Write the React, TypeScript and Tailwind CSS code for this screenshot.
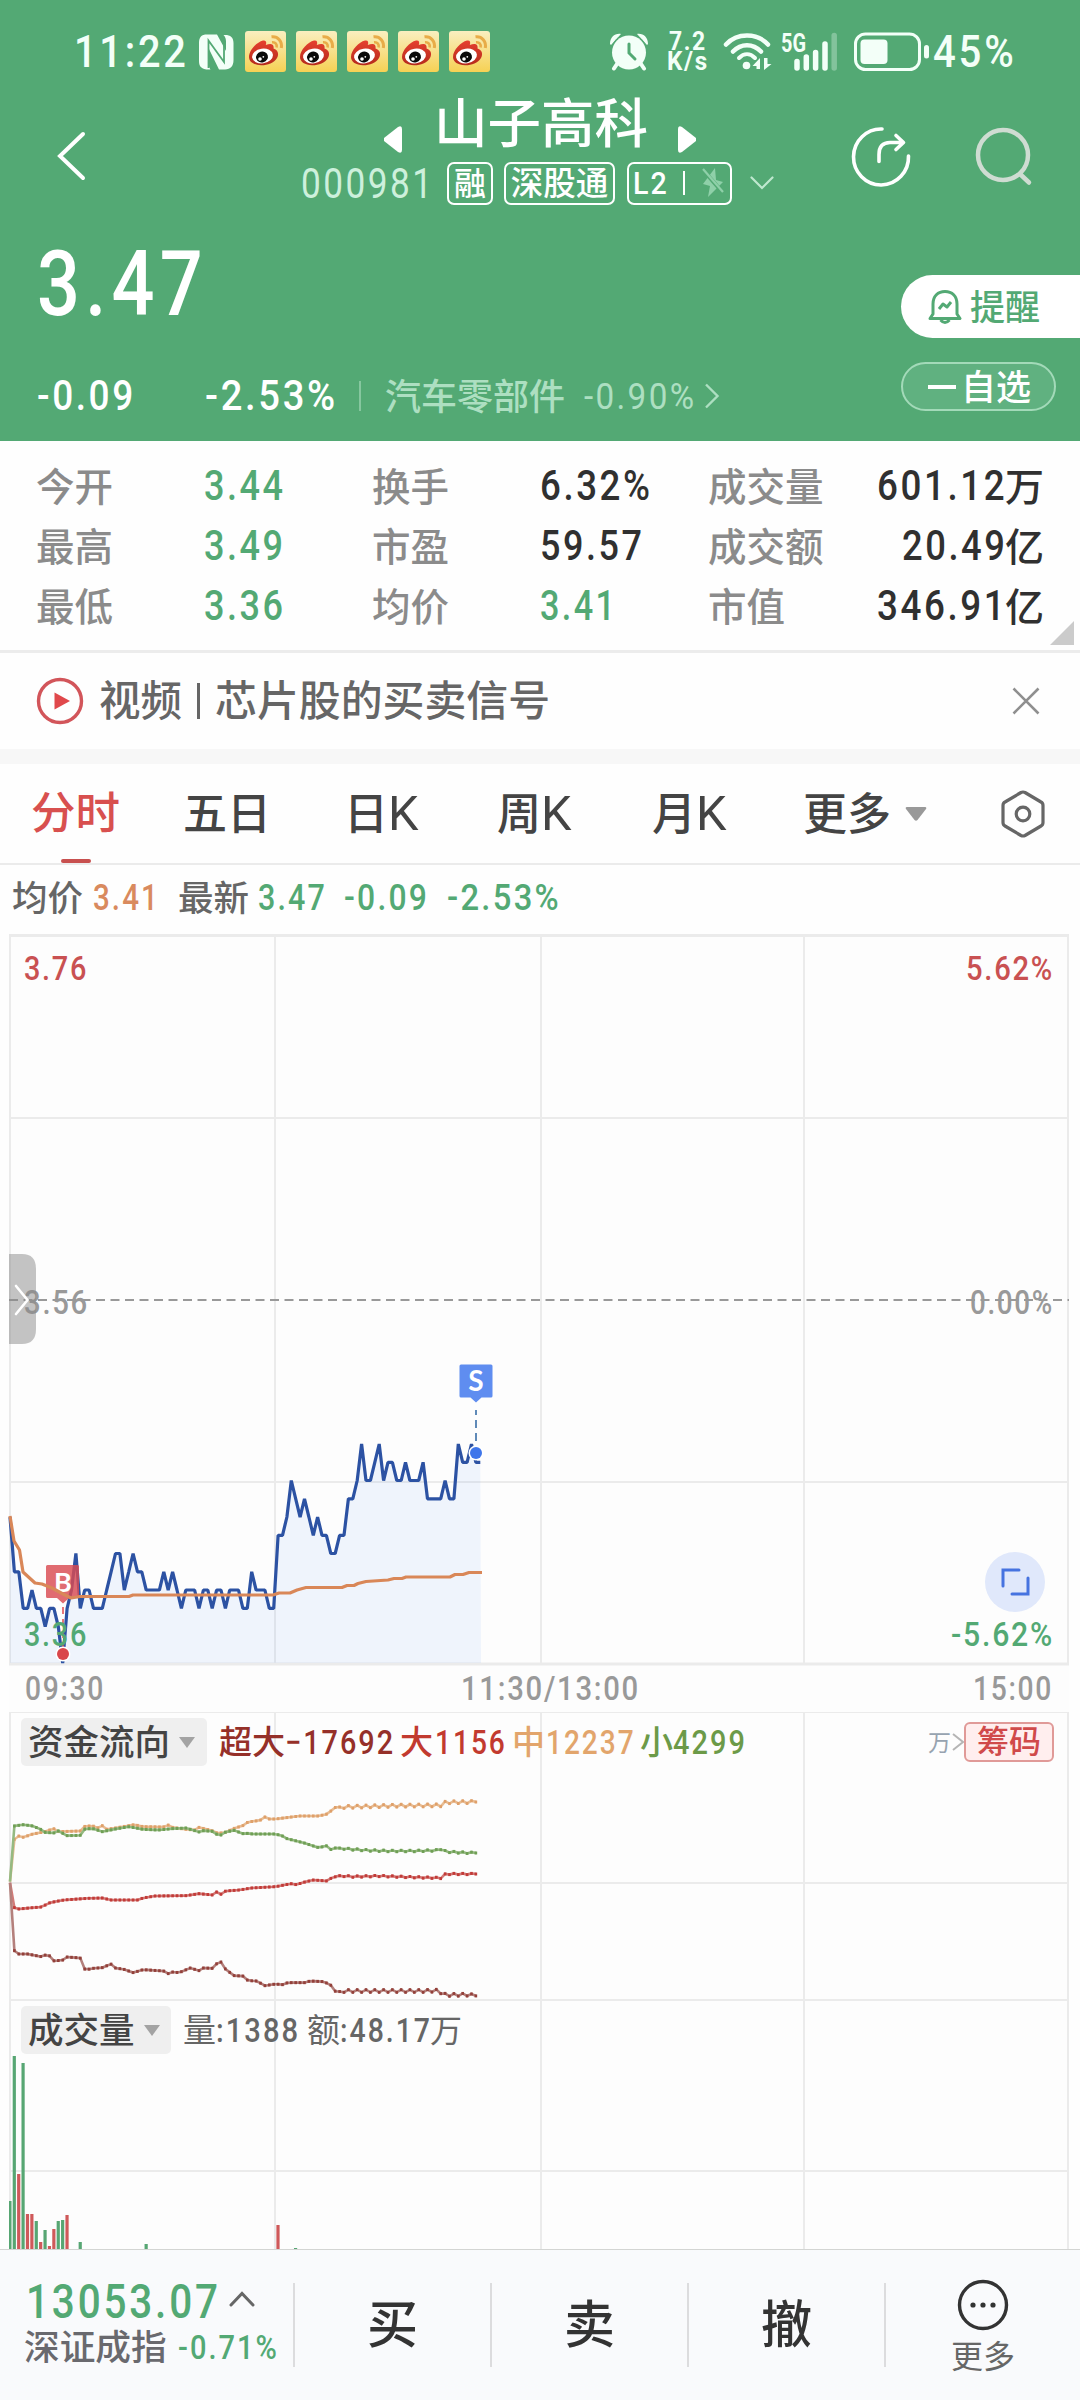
import { useLayoutEffect, useRef, useState } from "react";
import type { ReactNode } from "react";

/** Loosely tracked text, squeezed horizontally so that it takes exactly w pixels. */
function Fit({ w, className = "", children }: { w: number; className?: string; children: ReactNode }) {
  const ref = useRef<HTMLSpanElement>(null);
  const [k, setK] = useState(1);
  useLayoutEffect(() => {
    const el = ref.current;
    if (!el) return;
    const trailing = parseFloat(getComputedStyle(el).letterSpacing) || 0;
    setK(w / (el.offsetWidth - trailing));
  }, [w]);
  return (
    <span className={"block shrink-0 leading-none " + className} style={{ width: w }}>
      <span ref={ref} className="inline-block origin-left whitespace-nowrap align-top tracking-[0.07em]" style={{ transform: `scaleX(${k})` }}>
        {children}
      </span>
    </span>
  );
}

/** Chinese text, one em per character. */
function Cn({ className = "", children }: { className?: string; children: ReactNode }) {
  return (
    <span className={"block shrink-0 -translate-y-[0.06em] whitespace-nowrap font-['Noto_Sans_CJK_SC',sans-serif] leading-none " + className}>
      {children}
    </span>
  );
}

function Weibo() {
  return (
    <svg viewBox="0 0 41 41" className="h-[41px] w-[41px] shrink-0">
      <defs>
        <linearGradient id="wb" x1="0" y1="0" x2="0" y2="1">
          <stop offset="0" stopColor="#f9efc0" />
          <stop offset="1" stopColor="#f6d154" />
        </linearGradient>
        <linearGradient id="wr" x1="0" y1="0" x2="0" y2="1">
          <stop offset="0" stopColor="#e6402f" />
          <stop offset="1" stopColor="#b52a1c" />
        </linearGradient>
      </defs>
      <rect width="41" height="41" rx="3" fill="url(#wb)" />
      <path d="M4 26C4 19 12 11 18 9.5c3-.6 3.800 1.500 2.800 4.500 4-1.800 8.700-1.800 7.700 3.500 5 1.600 5.500 6 3.500 9.500C29 32 22 34.500 16 34.300 9 34 4 31 4 26z" fill="url(#wr)" />
      <ellipse cx="17.500" cy="25" rx="10.500" ry="7.300" fill="#fff" transform="rotate(-8 17.500 25)" />
      <ellipse cx="17" cy="26" rx="6" ry="5.400" fill="#0a0a0a" transform="rotate(-15 17 26)" />
      <circle cx="15" cy="28" r="1.800" fill="#fff" />
      <circle cx="18.300" cy="25.800" r=".9" fill="#fff" />
      <path d="M26.500 5.800C33 5 37.500 10.500 36.300 17" fill="none" stroke="#e8ac48" strokeWidth="3" />
      <path d="M27 11.300c3.500-.3 5.300 2 4.600 5.200" fill="none" stroke="#e8ac48" strokeWidth="2.600" />
    </svg>
  );
}

function StatusBar() {
  return (
    <div className="flex h-[103px] items-center text-[#f3fff8]">
      <Fit w={112} className="ml-[74px] text-[45px] font-medium">11:22</Fit>
      <svg viewBox="0 0 35 36" className="ml-[13px] h-[36px] w-[35px] shrink-0">
        <path d="M8 .5h10L27 17V8c0-3-.5-5-2.500-7C31 .5 34.500 3 34.500 9v17c0 6-3 9.500-8.500 9.500h-6L9.500 14v14c0 3 .5 5.500 2 7.500C3 36 0 33 0 27V9C0 3 2.500.5 8 .5z" fill="#f3fff8" />
        <path d="M12.500 13L20 25v-6" fill="none" />
        <path d="M20 9l7 12v6.500L12 7" fill="none" />
        <path d="M9.500 34V6.500L25 28V6" fill="none" stroke="#53a974" strokeWidth="1.800" />
      </svg>
      <div className="ml-[11px] flex gap-[10px]">
        <Weibo /><Weibo /><Weibo /><Weibo /><Weibo />
      </div>
      <svg viewBox="0 0 38 38" className="ml-[120px] h-[38px] w-[38px] shrink-0">
        <g fill="#f3fff8">
          <path d="M0 11C0 4 5 0 11 1L1 12zM38 11c0-7-5-11-11-10l10 11z" />
          <circle cx="19" cy="19.500" r="18.500" fill="#53a974" />
          <circle cx="19" cy="19.500" r="17" />
        </g>
        <path d="M7 31l-3 4.500M31 31l3 4.500" stroke="#f3fff8" strokeWidth="4" strokeLinecap="round" />
        <path d="M19 11v9l6 6" fill="none" stroke="#53a974" strokeWidth="3" strokeLinecap="round" />
      </svg>
      <div className="ml-[18px] flex w-[41px] shrink-0 -translate-y-[2px] flex-col items-center">
        <Fit w={36} className="h-[20px] text-[25px] font-bold">7.2</Fit>
        <Fit w={40} className="h-[22px] text-[25px] font-bold">K/s</Fit>
      </div>
      <svg viewBox="0 0 120 40" className="ml-[16px] h-[40px] w-[120px] shrink-0" fill="none" stroke="#f3fff8" strokeLinecap="round">
        <path d="M3 12.500C14 .500 34 .500 45 12.500" strokeWidth="4.500" />
        <path d="M10 19.500c8-8.500 20-8.500 28 0" strokeWidth="4.500" />
        <path d="M16 26c5-5 11-5 16 0" strokeWidth="4" />
        <circle cx="23.500" cy="33.500" r="3.800" fill="#f3fff8" stroke="none" />
        <path d="M29.500 34l7.500-8v11h-3.500v-3zM48.500 32l-7.500 6V26h3.500v6z" fill="#f3fff8" stroke="none" />
        <g strokeWidth="5.500">
          <path d="M74 29.500v6.500M83.300 25v11M92.600 20.500V36M102 12v24" />
          <path d="M111.200 3.500V36" opacity=".3" />
        </g>
        <text x="58" y="19.500" fill="#f3fff8" stroke="none" fontFamily="Roboto" fontWeight="700" fontSize="25" textLength="25" lengthAdjust="spacingAndGlyphs">5G</text>
      </svg>
      <svg viewBox="0 0 78 40" className="ml-[11px] h-[40px] w-[78px] shrink-0">
        <rect x="1.500" y="2" width="64" height="35.500" rx="10" fill="none" stroke="#f3fff8" strokeWidth="3" />
        <rect x="6.500" y="7.500" width="27" height="24.500" rx="4" fill="#f3fff8" />
        <rect x="70" y="13" width="5" height="13.500" rx="2.500" fill="#f3fff8" />
      </svg>
      <Fit w={81} className="ml-[1px] text-[45px] font-medium">45%</Fit>
    </div>
  );
}

function TitleBar() {
  return (
    <div className="flex h-[115px] items-start">
      <svg viewBox="0 0 32 52" className="ml-[56px] mt-[27px] h-[52px] w-[32px] shrink-0" fill="none" stroke="#fff" strokeWidth="4" strokeLinecap="round">
        <path d="M27 4L4 26l23 22" />
      </svg>
      <div className="ml-[213px] w-[474px] shrink-0">
        <div className="flex h-[59px] items-start">
          <svg viewBox="0 0 18 27" className="ml-[83px] mt-[23px] h-[27px] w-[18px]" fill="#fff">
            <path d="M0 12L14 1q4-2 4 2v21q0 4-4 2L0 15q-1-1.500 0-3z" />
          </svg>
          <Cn className="-mt-[7px] ml-[32px] text-[53.500px] font-medium text-white">山子高科</Cn>
          <svg viewBox="0 0 18 27" className="ml-[30px] mt-[23px] h-[27px] w-[18px]" fill="#fff">
            <path d="M18 12L4 1Q0-1 0 3v21q0 4 4 2l14-11q1-1.500 0-3z" />
          </svg>
        </div>
        <div className="flex h-[42px] items-center">
          <Fit w={131} className="text-[43px] text-[#cdf0dc]">000981</Fit>
          <div className="ml-[15px] flex h-[43px] w-[46px] items-center justify-center rounded-[7px] border-2 border-white text-white">
            <Cn className="text-[32px] font-medium">融</Cn>
          </div>
          <div className="ml-[11px] flex h-[43px] w-[111px] items-center justify-center rounded-[7px] border-2 border-white text-white">
            <Cn className="text-[32.500px] font-medium">深股通</Cn>
          </div>
          <div className="ml-[12px] flex h-[43px] w-[105px] items-center rounded-[7px] border-2 border-white text-white">
            <Fit w={34} className="ml-[4px] text-[31px] font-medium">L2</Fit>
            <span className="ml-[16px] h-[24px] w-[2px] bg-white" />
            <svg viewBox="0 0 22 30" className="ml-[17px] h-[30px] w-[22px]">
              <path d="M13 0L1 16l7 2-2 11 15-15-7-2z" fill="#8fd0a9" />
              <path d="M2 3l19 22" stroke="#53a974" strokeWidth="4" />
              <path d="M1 1l20 23" stroke="#8fd0a9" strokeWidth="2.200" />
            </svg>
          </div>
          <svg viewBox="0 0 24 14" className="ml-[18px] h-[14px] w-[24px]" fill="none" stroke="#bfe8cf" strokeWidth="2.200" strokeLinecap="round">
            <path d="M1.500 1.500L12 12 22.500 1.500" />
          </svg>
        </div>
      </div>
      <svg viewBox="0 0 60 62" className="ml-[76px] mt-[22px] h-[62px] w-[60px] shrink-0" fill="none" stroke="#fff" strokeWidth="3.600" strokeLinecap="round" strokeLinejoin="round">
        <path d="M31 4A27.500 28 0 1 0 57.500 31" />
        <path d="M28 36.500v-7q0-12 11-12h12M45 10.500l7.500 7L45 24.500" />
      </svg>
      <svg viewBox="0 0 60 62" className="ml-[63px] mt-[22px] h-[62px] w-[60px] shrink-0" fill="none" stroke="#cfdcd2" strokeWidth="4.500" strokeLinecap="round">
        <circle cx="29" cy="30" r="25" />
        <path d="M46 49l9 8.500" />
      </svg>
    </div>
  );
}

function Quote() {
  return (
    <div className="flex h-[223px] justify-between">
      <div>
        <Fit w={166} className="ml-[37px] mt-[22px] text-[90px] font-medium text-white">3.47</Fit>
        <div className="mt-[45px] flex h-[42px] items-center text-white">
          <Fit w={96} className="ml-[37px] text-[42px] font-medium">-0.09</Fit>
          <Fit w={130} className="ml-[72px] text-[42px] font-medium">-2.53%</Fit>
          <span className="ml-[24px] h-[30px] w-[2px] bg-[#86c79f]" />
          <Cn className="ml-[24px] text-[36px] font-medium text-[#addfc1]">汽车零部件</Cn>
          <Fit w={110} className="ml-[19px] text-[37px] text-[#addfc1]">-0.90%</Fit>
          <svg viewBox="0 0 16 26" className="ml-[10px] h-[26px] w-[16px]" fill="none" stroke="#addfc1" strokeWidth="2.400">
            <path d="M2 1.500L13.500 13 2 24.500" />
          </svg>
        </div>
      </div>
      <div className="w-[179px] pt-[57px]">
        <div className="flex h-[63px] items-center rounded-l-full bg-white text-[#53a974]">
          <svg viewBox="0 0 34 36" className="ml-[27px] h-[36px] w-[34px]" fill="none" stroke="#53a974" strokeWidth="3" strokeLinejoin="round">
            <path d="M5 25V15C5 7 10 2.500 17 2.500S29 7 29 15v10l3 4.500H2z" />
            <path d="M12.500 31q4.500 5 9 0M11 20l4-5 4 3 4-5" />
          </svg>
          <Cn className="ml-[8px] text-[35px] font-medium">提醒</Cn>
        </div>
        <div className="mt-[24px] flex h-[49px] w-[155px] items-center rounded-full border-2 border-[#a3dab9] bg-[#60b180] text-white">
          <span className="ml-[25px] h-[4px] w-[28px] bg-white" />
          <Cn className="ml-[5px] text-[35px] font-medium">自选</Cn>
        </div>
      </div>
    </div>
  );
}

const STATS = [
  ["今开", "3.44", "换手", "6.32%", "成交量", "601.12", "万"],
  ["最高", "3.49", "市盈", "59.57", "成交额", "20.49", "亿"],
  ["最低", "3.36", "均价", "3.41", "市值", "346.91", "亿"],
];
const STAT_W = [[110, 128], [102, 103], [75, 128]];

function Stats() {
  return (
    <div className="relative h-[212px] border-b-[3px] border-[#ececec] pt-[15px]">
      {STATS.map((r, i) => (
        <div key={r[0]} className="flex h-[60px] items-center font-medium text-[#8b8b8b]">
          <Cn className="ml-[36px] w-[168px] text-[38.500px]">{r[0]}</Cn>
          <Fit w={79} className="text-[42px] text-[#53a974]">{r[1]}</Fit>
          <Cn className="ml-[89px] w-[168px] text-[38.500px]">{r[2]}</Cn>
          <Fit w={STAT_W[i][0]} className={i === 2 ? "text-[42px] text-[#53a974]" : "text-[42px] text-[#303030]"}>{r[3]}</Fit>
          <div className="ml-auto flex w-[336px] items-center">
            <Cn className="text-[38.500px]">{r[4]}</Cn>
            <Fit w={STAT_W[i][1]} className="ml-auto text-[42px] text-[#303030]">{r[5]}</Fit>
            <Cn className="text-[39px] text-[#303030]">{r[6]}</Cn>
          </div>
          <span className="w-[36px] shrink-0" />
        </div>
      ))}
      <svg viewBox="0 0 24 24" className="absolute bottom-[5px] right-[6px] h-[24px] w-[24px]" fill="#cbcbcb">
        <path d="M24 0v24H0z" />
      </svg>
    </div>
  );
}

function Notice() {
  return (
    <div className="flex h-[96px] items-center font-medium text-[#666]">
      <svg viewBox="0 0 48 48" className="ml-[36px] h-[48px] w-[48px]">
        <circle cx="24" cy="24" r="21.500" fill="none" stroke="#d2555a" strokeWidth="3.400" />
        <path d="M18.500 15.500L34 24l-15.500 8.500z" fill="#e0484b" />
      </svg>
      <Cn className="ml-[15px] text-[41.500px]">视频</Cn>
      <span className="ml-[15px] h-[36px] w-[3px] bg-[#666]" />
      <Cn className="ml-[15px] text-[41.900px]">芯片股的买卖信号</Cn>
      <svg viewBox="0 0 28 28" className="ml-auto mr-[40px] h-[28px] w-[28px]" stroke="#8f8f8f" strokeWidth="2.600">
        <path d="M1.500 1.500l25 25M26.500 1.500l-25 25" />
      </svg>
    </div>
  );
}

function Tabs() {
  return (
    <div className="flex h-[101px] items-center border-b-[2px] border-[#ebebeb] text-[44px] font-medium text-[#444]">
      <div className="relative ml-[31px] flex h-full items-center text-[#d8504f]">
        <Cn className="text-[44.500px]">分时</Cn>
        <span className="absolute bottom-0 left-[30px] h-[4px] w-[30px] rounded-sm bg-[#c8504f]" />
      </div>
      <Cn className="ml-[63px] text-[44px]">五日</Cn>
      <div className="ml-[73px] flex items-center"><Cn>日</Cn><Fit w={30} className="text-[48px] font-normal">K</Fit></div>
      <div className="ml-[79px] flex items-center"><Cn>周</Cn><Fit w={30} className="text-[48px] font-normal">K</Fit></div>
      <div className="ml-[81px] flex items-center"><Cn>月</Cn><Fit w={30} className="text-[48px] font-normal">K</Fit></div>
      <Cn className="ml-[77px] text-[44px]">更多</Cn>
      <svg viewBox="0 0 22 14" className="ml-[14px] h-[14px] w-[22px]" fill="#999"><path d="M2 0h18q2 0 1 2l-8.500 11q-1.500 1.500-3 0L1 2Q0 0 2 0z" /></svg>
      <svg viewBox="0 0 44 48" className="ml-auto mr-[35px] h-[48px] w-[44px]" fill="none" stroke="#666" strokeWidth="3.200" strokeLinejoin="round">
        <path d="M20 2.500q2-1 4 0L40 12q2 1 2 3.500v17q0 2.500-2 3.500l-16 9.500q-2 1-4 0L4 36q-2-1-2-3.500v-17Q2 13 4 12z" />
        <circle cx="22" cy="24" r="6.800" />
      </svg>
    </div>
  );
}

function Legend() {
  return (
    <div className="flex h-[67px] items-center pb-[2px] text-[37px] font-medium text-[#53a974]">
      <Cn className="ml-[12px] text-[35.500px] text-[#666]">均价</Cn>
      <Fit w={65} className="ml-[10px] text-[#d98a5e]">3.41</Fit>
      <Cn className="ml-[20px] text-[35.500px] text-[#666]">最新</Cn>
      <Fit w={67} className="ml-[9px]">3.47</Fit>
      <Fit w={83} className="ml-[19px]">-0.09</Fit>
      <Fit w={112} className="ml-[20px]">-2.53%</Fit>
    </div>
  );
}

const STEP = 4.395;
const X0 = 10;

const PRICES = [
  44, 41, 41, 39, 39, 40, 39, 39, 38, 39, 39, 38, 36, 39, 40, 42, 39, 40, 40, 39, 39, 39, 40, 41, 42, 42, 40, 41, 42, 41, 41, 40, 40, 40, 40, 41,
  40, 41, 40, 39, 40, 40, 40, 39, 40, 40, 39, 40, 40, 39, 40, 40, 40, 39, 39, 41, 40, 40, 40, 39, 39, 43, 43, 44, 46, 45, 44, 45, 44, 43, 44, 43,
  43, 42, 42, 43, 43, 45, 45, 46, 48, 46, 46, 47, 48, 46, 47, 47, 46, 46, 47, 46, 46, 46, 47, 45, 45, 45, 45, 46, 45, 45, 48, 47, 47, 48, 47, 47,
];
const PRICE_LINE = PRICES.map((p, i) => `${(X0 + i * STEP).toFixed(1)},${(731 - (p - 36) * 18.250).toFixed(1)}`).join(" ");

const AVERAGE =
  "10,584 14,609 19.500,618 23,640 35,651 42,652 52,656 63,662 71,666 80,664.500 129,664.500 133,663 273,663 279,661 290,661 297,658 306,655.500 342,655.500 347,653.500 354,653.500 358,651.500 366,649.500 388,648 394,646.500 402,646.500 406,645 450,645 455,642.500 463,642.500 469,640.500 482,640.500";

function Grid({ h, rows }: { h: number; rows: number[] }) {
  return (
    <g stroke="#ebebeb" strokeWidth="2">
      {[10, 275, 541, 804, 1068].map((x) => <path key={x} d={`M${x} 0V${h}`} />)}
      {rows.map((y) => <path key={y} d={`M9 ${y}H1069`} />)}
    </g>
  );
}

function Label({ x, y, w, color, children }: { x: number; y: number; w: number; color: string; children: ReactNode }) {
  return (
    <text x={x} y={y} fill={color} fontFamily="Roboto" fontWeight="500" fontSize="34" textLength={w} lengthAdjust="spacingAndGlyphs" letterSpacing="2">{children}</text>
  );
}

function PriceChart() {
  return (
    <svg viewBox="0 0 1080 780" className="block h-[780px] w-[1080px]">
      <rect x="9" y="3" width="1060" height="777" fill="#fdfdfd" />
      <g transform="translate(0 3)">
        <Grid h={729} rows={[0, 183, 547, 729]} />
        <path d="M9 0.500H1069M9 729H1069" stroke="#ebebeb" strokeWidth="3" />
      </g>
      <polygon points={`10,731 ${PRICE_LINE} 481,731`} fill="#3b82f6" fillOpacity="0.07" />
      <path d="M9 368H1069" stroke="#999" strokeWidth="2" strokeDasharray="9 5.500" />
      <polyline points={PRICE_LINE} fill="none" stroke="#2c52a3" strokeWidth="3.200" strokeLinejoin="bevel" />
      <path d="M47.500 633h30q1.500 0 1.500 1.500v30q0 1.500-1.500 1.500H69l-6 5.500-6-5.500h-9.500q-1.500 0-1.500-1.500v-30q0-1.500 1.500-1.500z" fill="#d94a52" fillOpacity="0.82" />
      <text x="63" y="660" textAnchor="middle" fill="#fff" fontFamily="Lato" fontWeight="700" fontSize="27">B</text>
      <path d="M63 675v42" stroke="#e0484b" strokeWidth="2" strokeDasharray="7 5" strokeOpacity=".75" />
      <Label x={24} y={714} w={64} color="#53a974">3.36</Label>
      <circle cx="63" cy="722" r="7.500" fill="#fff" />
      <circle cx="63" cy="722" r="6" fill="#d9474b" />
      <polyline points={AVERAGE} fill="none" stroke="#d98758" strokeWidth="3.200" strokeLinejoin="round" />
      <path d="M461 432.500h30q1.500 0 1.500 1.500v30q0 1.500-1.500 1.500h-9.500l-5.500 5-5.500-5H461q-1.500 0-1.500-1.500v-30q0-1.500 1.500-1.500z" fill="#5f8df0" />
      <text x="476" y="459" textAnchor="middle" fill="#fff" fontFamily="Lato" fontWeight="700" fontSize="28">S</text>
      <path d="M476 478v36" stroke="#5f8ab8" strokeWidth="2" strokeDasharray="8 5" strokeDashoffset="3" />
      <circle cx="476" cy="521" r="7.500" fill="#fff" />
      <circle cx="476" cy="521" r="6" fill="#3f76ea" />
      <Label x={24} y={48} w={64} color="#c95152">3.76</Label>
      <Label x={966} y={48} w={88} color="#c95152">5.62%</Label>
      <Label x={24} y={382} w={65} color="#999">3.56</Label>
      <Label x={970} y={382} w={84} color="#999">0.00%</Label>
      <Label x={951} y={714} w={103} color="#53a974">-5.62%</Label>
      <Label x={25} y={768} w={80} color="#999">09:30</Label>
      <Label x={461} y={768} w={179} color="#999">11:30/13:00</Label>
      <Label x={973} y={768} w={80} color="#999">15:00</Label>
      <path d="M9 322h13q14 0 14 15v60q0 15-14 15H9z" fill="#8a8a8a" fillOpacity=".5" />
      <path d="M16 354l11.500 14L16 382" fill="none" stroke="#fff" strokeWidth="2.600" strokeLinecap="round" />
      <circle cx="1015" cy="650" r="30" fill="#e0e8fb" />
      <path d="M1003 654v-16h16M1028 646v16h-16" fill="none" stroke="#4673e0" strokeWidth="3" strokeLinecap="round" />
    </svg>
  );
}

type Pt = [number, number];
/** Key points of each flow, as [minute, height in the panel]. */
const scale = (pts: Pt[]): Pt[] => pts.map(([x, y]) => [(x - 29) / 12.76, y / 3 - 12]);
const FLOWS: { color: string; line: string; ripple: number; pts: Pt[] }[] = [
  { color: "#dfa06a", line: "#e8bd94", ripple: 1.3, pts: scale([[29,545],[41,418],[54,408],[68,412],[92,403],[130,395],[156,386],[170,395],[235,393],[247,378],[270,378],[285,384],[297,377],[310,388],[335,384],[390,374],[415,380],[475,381],[488,375],[500,382],[540,388],[565,390],[578,382],[615,392],[630,399],[650,399],[680,385],[705,377],[720,366],[755,361],[769,351],[780,357],[800,357],[870,348],[925,348],[950,342],[975,321],[1000,321],[1150,317],[1280,316],[1294,307],[1383,306]]) },
  { color: "#6f9f55", line: "#95b981", ripple: 0.7, pts: scale([[29,545],[41,378],[68,374],[95,378],[118,388],[130,397],[156,399],[168,392],[195,407],[233,406],[247,386],[270,386],[297,395],[335,387],[375,380],[415,388],[460,390],[500,386],[540,384],[578,396],[590,392],[617,394],[632,405],[642,405],[655,396],[680,391],[705,401],[720,400],[733,402],[800,402],[820,408],[833,416],[880,428],[925,443],[950,437],[962,450],[975,443],[1010,447],[1065,451],[1130,453],[1205,453],[1270,451],[1282,446],[1294,455],[1345,458],[1383,459]]) },
  { color: "#c23b38", line: "#d27b78", ripple: 0.6, pts: scale([[29,548],[41,623],[55,627],[95,623],[120,621],[145,608],[185,600],[255,595],[297,594],[322,600],[400,600],[415,594],[450,588],[540,587],[578,581],[617,585],[630,575],[642,583],[655,573],[695,570],[730,564],[800,560],[845,551],[860,554],[885,546],[910,540],[950,543],[962,534],[985,527],[1025,530],[1100,528],[1180,531],[1280,534],[1294,522],[1383,522]]) },
  { color: "#93403a", line: "#b4807c", ripple: 1.3, pts: scale([[29,548],[41,752],[54,762],[80,762],[120,770],[132,765],[146,768],[157,783],[183,780],[195,771],[233,774],[247,810],[270,805],[297,803],[322,792],[335,804],[360,808],[387,818],[415,809],[475,813],[488,821],[500,816],[520,818],[552,804],[578,812],[590,804],[617,805],[630,790],[642,786],[655,808],[680,827],[705,828],[720,842],[745,843],[769,857],[800,852],[820,854],[835,848],[885,848],[900,843],[940,845],[960,855],[975,876],[1000,873],[1230,873],[1270,872],[1294,885],[1358,884],[1383,888]]) },
];

function minuteValues(pts: Pt[], ripple: number): Pt[] {
  return Array.from({ length: 107 }, (_, i) => {
    let k = 1;
    while (k < pts.length - 1 && pts[k][0] < i) k++;
    const [xa, ya] = pts[k - 1];
    const [xb, yb] = pts[k];
    const t = Math.min(1, Math.max(0, (i - xa) / (xb - xa)));
    const y = i === 1 ? pts[1][1] : ya + (yb - ya) * t;
    return [X0 + i * STEP, y + (i > 75 && i < 106 ? (i % 2 ? -ripple : ripple) : 0)];
  });
}

function FlowChart() {
  return (
    <svg viewBox="0 0 1080 288" className="block h-[288px] w-[1080px]">
      <rect x="9" width="1060" height="288" fill="#fdfdfd" />
      <Grid h={288} rows={[0, 171, 288]} />
      {FLOWS.map((f) => {
        const v = minuteValues(f.pts, f.ripple);
        return (
          <g key={f.color}>
            <polyline points={v.map((p) => p.join(",")).join(" ")} fill="none" stroke={f.line} strokeWidth="2.600" />
            {v.slice(1).map(([x, y]) => <rect key={x} x={x - 1.300} y={y - 1.500} width="2.600" height="3" fill={f.color} />)}
          </g>
        );
      })}
    </svg>
  );
}

const BARS: [number, number, "g" | "r"][] = [
  [0, 48, "g"], [1, 193, "g"], [2, 75, "r"], [3, 186, "g"], [4, 35, "r"], [5, 35, "r"], [6, 28, "g"], [7, 7, "r"], [8, 19, "g"],
  [9, 3, "r"], [10, 20, "r"], [11, 28, "g"], [12, 29, "g"], [13, 34, "r"], [16, 7, "g"], [31, 5, "g"], [61, 24, "r"], [65, 1, "g"],
];

function VolumeChart() {
  return (
    <svg viewBox="0 0 1080 249" className="block h-[249px] w-[1080px]">
      <rect x="9" width="1060" height="249" fill="#fdfdfd" />
      <Grid h={249} rows={[0, 171]} />
      {BARS.map(([m, h, c]) => (
        <rect key={m} x={Math.max(9, X0 + m * STEP - 1.700)} y={249 - h} width={m ? 3.200 : 2.500} height={h} fill={c === "g" ? "#57a673" : "#cf595a"} />
      ))}
    </svg>
  );
}

function Picker({ className = "", children }: { className?: string; children: string }) {
  return (
    <div className={"flex h-[48px] shrink-0 items-center rounded-[5px] bg-[#efefef] pl-[7px] " + className}>
      <Cn className="text-[35.500px] text-[#444]">{children}</Cn>
      <svg viewBox="0 0 16 11" className="ml-[9px] h-[11px] w-[16px]" fill="#a3a3a3"><path d="M0 0h16L8 11z" /></svg>
    </div>
  );
}

function FlowPanel() {
  return (
    <div className="relative h-[288px]">
      <FlowChart />
      <div className="absolute inset-x-0 top-[6px] flex h-[48px] items-center text-[34px] font-medium">
        <Picker className="ml-[21px] w-[186px]">资金流向</Picker>
        <div className="ml-[12px] flex items-center text-[#953029]"><Cn className="text-[33px]">超大</Cn><Fit w={108}>−17692</Fit></div>
        <div className="ml-[7px] flex items-center text-[#c23a2f]"><Cn className="text-[33px]">大</Cn><Fit w={70} className="ml-[2px]">1156</Fit></div>
        <div className="ml-[7px] flex items-center text-[#e2a56c]"><Cn className="text-[33px]">中</Cn><Fit w={88} className="ml-[1px]">12237</Fit></div>
        <div className="ml-[6px] flex items-center text-[#6c9a48]"><Cn className="text-[33px]">小</Cn><Fit w={72}>4299</Fit></div>
        <Cn className="ml-auto text-[23px] font-normal text-[#97a3b0]">万</Cn>
        <svg viewBox="0 0 12 18" className="ml-[1px] h-[18px] w-[12px]" fill="none" stroke="#b5b5b5" strokeWidth="2"><path d="M1 1l10 8-10 8" /></svg>
        <div className="mr-[26px] flex h-[40px] w-[90px] items-center justify-center rounded-[6px] border-2 border-[#e09a98] bg-[#ffeeee] text-[#d04a4a]">
          <Cn className="-mt-[3px] text-[32px]">筹码</Cn>
        </div>
      </div>
    </div>
  );
}

function VolumePanel() {
  return (
    <div className="relative h-[249px]">
      <VolumeChart />
      <div className="absolute inset-x-0 top-[6px] flex h-[48px] items-center text-[34px] font-medium text-[#666]">
        <Picker className="ml-[21px] w-[150px]">成交量</Picker>
        <Cn className="ml-[12px] text-[33px] font-normal">量</Cn>
        <Fit w={82}>:1388</Fit>
        <Cn className="ml-[9px] text-[33px] font-normal">额</Cn>
        <Fit w={90}>:48.17</Fit>
        <Cn className="text-[32px] font-normal">万</Cn>
      </div>
    </div>
  );
}

function BottomBar() {
  return (
    <div className="flex h-[151px] border-t border-[#d3d5d3] bg-[#f9fafc]">
      <div className="w-[293px] shrink-0">
        <div className="ml-[26px] mt-[27px] flex h-[48px] items-center">
          <Fit w={192} className="text-[49px] font-medium text-[#53a974]">13053.07</Fit>
          <svg viewBox="0 0 26 16" className="mb-[4px] ml-[11px] h-[16px] w-[26px]" fill="none" stroke="#666" strokeWidth="3" strokeLinecap="round"><path d="M2 14L13 2.500 24 14" /></svg>
        </div>
        <div className="ml-[24px] mt-[2px] flex h-[40px] items-center">
          <Cn className="text-[35.700px] font-medium text-[#69696e]">深证成指</Cn>
          <Fit w={99} className="ml-[11px] text-[33px] font-medium text-[#53a974]">-0.71%</Fit>
        </div>
      </div>
      {["买", "卖", "撤"].map((t) => (
        <div key={t} className="flex w-[197px] shrink-0 items-start">
          <span className="mt-[33px] h-[84px] w-[2px] bg-[#dcdcde]" />
          <Cn className="mt-[49px] w-[195px] text-center text-[51px] font-medium text-[#333]">{t}</Cn>
        </div>
      ))}
      <div className="flex flex-1 items-start">
        <span className="mt-[33px] h-[84px] w-[2px] bg-[#dcdcde]" />
        <div className="flex flex-1 flex-col items-center pt-[29px]">
          <svg viewBox="0 0 52 52" className="h-[52px] w-[52px]">
            <circle cx="26" cy="26" r="23.500" fill="none" stroke="#333" strokeWidth="3.400" />
            <circle cx="16" cy="26" r="2.600" fill="#333" /><circle cx="26" cy="26" r="2.600" fill="#333" /><circle cx="36" cy="26" r="2.600" fill="#333" />
          </svg>
          <Cn className="mt-[9px] text-[32px] text-[#666]">更多</Cn>
        </div>
      </div>
    </div>
  );
}

export default function App() {
  return (
    <div className="h-[2400px] w-[1080px] overflow-hidden bg-[#fefefe] font-['Roboto','Noto_Sans_CJK_SC',sans-serif]">
      <div className="h-[441px] bg-[#53a974]">
        <StatusBar />
        <TitleBar />
        <Quote />
      </div>
      <Stats />
      <Notice />
      <div className="h-[15px] bg-[#f7f7f7]" />
      <Tabs />
      <Legend />
      <PriceChart />
      <FlowPanel />
      <VolumePanel />
      <BottomBar />
    </div>
  );
}
